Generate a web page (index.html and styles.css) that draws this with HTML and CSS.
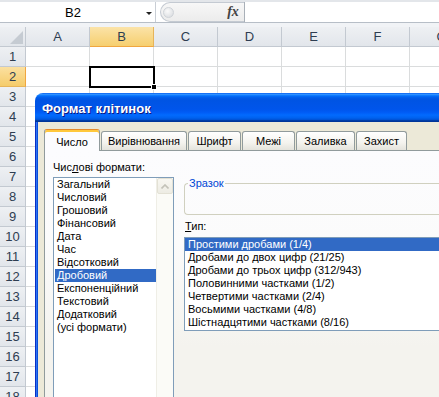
FILE: index.html
```html
<!DOCTYPE html>
<html>
<head>
  <meta charset="utf-8">
  <title>Формат клітинок</title>
  <link rel="stylesheet" href="styles.css">
</head>
<body>
  <div class="formula-bar">
    <div class="name-box">
      <span class="name-text">B2</span>
      <span class="drop"></span>
    </div>
    <div class="fx-box">
      <span class="grip"></span>
      <span class="fx">fx</span>
    </div>
    <div class="formula-input"></div>
  </div>
  <div class="bar-gap"></div>

  <div class="sheet">
    <div class="row head">
      <div class="corner"><span class="corner-mark"></span></div>
      <div class="col">A</div><div class="col sel">B</div><div class="col">C</div><div class="col">D</div><div class="col">E</div><div class="col">F</div><div class="col">G</div>
    </div>
    <div class="row"><div class="rh">1</div><div class="c"></div><div class="c"></div><div class="c"></div><div class="c"></div><div class="c"></div><div class="c"></div><div class="c"></div></div>
    <div class="row"><div class="rh sel">2</div><div class="c"></div><div class="c active"><span class="handle"></span></div><div class="c"></div><div class="c"></div><div class="c"></div><div class="c"></div><div class="c"></div></div>
    <div class="row"><div class="rh">3</div><div class="c"></div><div class="c"></div><div class="c"></div><div class="c"></div><div class="c"></div><div class="c"></div><div class="c"></div></div>
    <div class="row"><div class="rh">4</div><div class="c"></div><div class="c"></div><div class="c"></div><div class="c"></div><div class="c"></div><div class="c"></div><div class="c"></div></div>
    <div class="row"><div class="rh">5</div><div class="c"></div><div class="c"></div><div class="c"></div><div class="c"></div><div class="c"></div><div class="c"></div><div class="c"></div></div>
    <div class="row"><div class="rh">6</div><div class="c"></div><div class="c"></div><div class="c"></div><div class="c"></div><div class="c"></div><div class="c"></div><div class="c"></div></div>
    <div class="row"><div class="rh">7</div><div class="c"></div><div class="c"></div><div class="c"></div><div class="c"></div><div class="c"></div><div class="c"></div><div class="c"></div></div>
    <div class="row"><div class="rh">8</div><div class="c"></div><div class="c"></div><div class="c"></div><div class="c"></div><div class="c"></div><div class="c"></div><div class="c"></div></div>
    <div class="row"><div class="rh">9</div><div class="c"></div><div class="c"></div><div class="c"></div><div class="c"></div><div class="c"></div><div class="c"></div><div class="c"></div></div>
    <div class="row"><div class="rh">10</div><div class="c"></div><div class="c"></div><div class="c"></div><div class="c"></div><div class="c"></div><div class="c"></div><div class="c"></div></div>
    <div class="row"><div class="rh">11</div><div class="c"></div><div class="c"></div><div class="c"></div><div class="c"></div><div class="c"></div><div class="c"></div><div class="c"></div></div>
    <div class="row"><div class="rh">12</div><div class="c"></div><div class="c"></div><div class="c"></div><div class="c"></div><div class="c"></div><div class="c"></div><div class="c"></div></div>
    <div class="row"><div class="rh">13</div><div class="c"></div><div class="c"></div><div class="c"></div><div class="c"></div><div class="c"></div><div class="c"></div><div class="c"></div></div>
    <div class="row"><div class="rh">14</div><div class="c"></div><div class="c"></div><div class="c"></div><div class="c"></div><div class="c"></div><div class="c"></div><div class="c"></div></div>
    <div class="row"><div class="rh">15</div><div class="c"></div><div class="c"></div><div class="c"></div><div class="c"></div><div class="c"></div><div class="c"></div><div class="c"></div></div>
    <div class="row"><div class="rh">16</div><div class="c"></div><div class="c"></div><div class="c"></div><div class="c"></div><div class="c"></div><div class="c"></div><div class="c"></div></div>
    <div class="row"><div class="rh">17</div><div class="c"></div><div class="c"></div><div class="c"></div><div class="c"></div><div class="c"></div><div class="c"></div><div class="c"></div></div>
    <div class="row"><div class="rh">18</div><div class="c"></div><div class="c"></div><div class="c"></div><div class="c"></div><div class="c"></div><div class="c"></div><div class="c"></div></div>
  </div>

  <div class="dialog">
    <div class="dialog-title">Формат клітинок</div>
    <div class="dialog-body">
      <div class="tabs">
        <div class="tab on tab-number">Число</div>
        <div class="tab tab-align">Вирівнювання</div>
        <div class="tab tab-font">Шрифт</div>
        <div class="tab tab-border">Межі</div>
        <div class="tab tab-fill">Заливка</div>
        <div class="tab tab-protect">Захист</div>
      </div>
      <div class="panel">
        <div class="left-col">
          <div class="label">Чис<u>л</u>ові формати:</div>
          <div class="listbox cats">
            <div class="items">
              <div class="item">Загальний</div>
              <div class="item">Числовий</div>
              <div class="item">Грошовий</div>
              <div class="item">Фінансовий</div>
              <div class="item">Дата</div>
              <div class="item">Час</div>
              <div class="item">Відсотковий</div>
              <div class="item picked">Дробовий</div>
              <div class="item">Експоненційний</div>
              <div class="item">Текстовий</div>
              <div class="item">Додатковий</div>
              <div class="item">(усі формати)</div>
            </div>
            <div class="scrollbar">
              <div class="scroll-btn">
                <svg width="8" height="5" viewBox="0 0 8 5"><path d="M0.5 4.5 L4 1 L7.5 4.5" fill="none" stroke="#c3c2b8" stroke-width="1.6"/></svg>
              </div>
            </div>
          </div>
        </div>
        <div class="right-col">
          <fieldset class="sample">
            <legend>Зразок</legend>
          </fieldset>
          <div class="label type-label"><u>Т</u>ип:</div>
          <div class="listbox types">
            <div class="item picked">Простими дробами (1/4)</div>
            <div class="item">Дробами до двох цифр (21/25)</div>
            <div class="item">Дробами до трьох цифр (312/943)</div>
            <div class="item">Половинними частками (1/2)</div>
            <div class="item">Четвертими частками (2/4)</div>
            <div class="item">Восьмими частками (4/8)</div>
            <div class="item">Шістнадцятими частками (8/16)</div>
          </div>
        </div>
      </div>
    </div>
  </div>
</body>
</html>
```

FILE: styles.css
```css
* {
  box-sizing: border-box;
}
body {
  margin: 0;
  width: 439px;
  height: 397px;
  overflow: hidden;
  position: relative;
  background-color: #fff;
  font-family: "Liberation Sans", Arial, sans-serif;
}

/* formula bar */
.formula-bar {
  height: 23px;
  display: flex;
  background-color: #fff;
  border-top: 2px solid #e3e6ea;
  border-bottom: 1px solid #b7bec7;
}
.name-box {
  width: 156px;
  display: flex;
  align-items: center;
  border-right: 1px solid #c9ced5;
}
.name-text {
  flex: 1;
  text-align: center;
  font-size: 13px;
  color: #000;
}
.drop {
  width: 0;
  height: 0;
  margin: 2px 3px 0 0;
  border-left: 3px solid transparent;
  border-right: 3px solid transparent;
  border-top: 3px solid #222;
}
.fx-box {
  width: 84px;
  margin-left: 4px;
  display: flex;
  align-items: center;
  justify-content: space-between;
  border: 1px solid #c4cad2;
  border-right: none;
  border-radius: 10px 0 0 10px;
  background: linear-gradient(#f7f7f7, #ececec);
}
.grip {
  width: 11px;
  height: 11px;
  margin-left: 2px;
  border-radius: 50%;
  background: radial-gradient(circle at 40% 35%, #fafafa, #d6d9dd);
  border: 1px solid #cfd3d8;
}
.fx {
  width: 22px;
  text-align: center;
  font-family: "Liberation Serif", serif;
  font-style: italic;
  font-weight: bold;
  font-size: 14px;
  color: #444;
}
.formula-input {
  flex: 1;
  background-color: #fff;
  border-left: 1px solid #a9b0b8;
}
.bar-gap {
  height: 4px;
  background-color: #f1f3f6;
}

/* sheet */
.row {
  display: flex;
  height: 20px;
}
.corner,
.col,
.rh {
  background: linear-gradient(#eef0f3, #e2e6eb);
  color: #2e3d51;
  font-size: 13px;
  border-right: 1px solid #c3c9d1;
  border-bottom: 1px solid #c3c9d1;
}
.corner {
  width: 26px;
  flex: none;
  display: flex;
  align-items: flex-end;
  justify-content: flex-end;
  padding: 0 2px 2px 0;
}
.corner-mark {
  width: 0;
  height: 0;
  border-left: 13px solid transparent;
  border-bottom: 13px solid #c5cbd2;
}
.col {
  width: 64px;
  flex: none;
  text-align: center;
  line-height: 19px;
}
.rh {
  width: 26px;
  flex: none;
  text-align: center;
  line-height: 19px;
}
.col.sel {
  background: linear-gradient(#fbe3a8, #f6cf6f);
  border-bottom-color: #f0a640;
  border-right-color: #e6b45a;
}
.rh.sel {
  background: linear-gradient(#fbe0a0, #f5cc6b);
  border-right-color: #f0a640;
  border-bottom-color: #e6b45a;
}
.c {
  width: 64px;
  flex: none;
  border-right: 1px solid #dadcdd;
  border-bottom: 1px solid #dadcdd;
}
.c.active {
  position: relative;
}
.c.active::after {
  content: "";
  position: absolute;
  left: -1px;
  top: -1px;
  right: -2px;
  bottom: -2px;
  border: 2px solid #000;
}
.handle {
  position: absolute;
  right: -4px;
  bottom: -4px;
  width: 6px;
  height: 6px;
  background-color: #000;
  border: 1px solid #fff;
  z-index: 1;
}

/* dialog */
.dialog {
  position: absolute;
  left: 35px;
  top: 93px;
  width: 420px;
  height: 320px;
  display: flex;
  flex-direction: column;
  font-family: "Liberation Sans", Arial, sans-serif;
  font-size: 11px;
  color: #000;
}
.dialog-title {
  height: 29px;
  flex: none;
  padding: 2px 0 0 7px;
  line-height: 27px;
  border-radius: 8px 8px 0 0;
  background: linear-gradient(#0058ee 0%, #3593ff 4%, #288eff 6%, #127dff 8%, #036ffc 10%, #0262ee 14%, #0057e5 20%, #0054e3 24%, #0055eb 56%, #005bf5 66%, #026afe 76%, #0062ef 86%, #0052d6 92%, #0040ab 94%, #003092 100%);
  color: #fff;
  font-weight: bold;
  font-size: 13px;
  text-shadow: 1px 1px #0a1883;
}
.dialog-body {
  flex: 1;
  padding: 7px 0 0 9px;
  background: linear-gradient(to right, #0a2fc4 0 1px, #2b74f2 1px 2px, #0a4ddc 2px 3px, #ece9d8 3px);
  display: flex;
  flex-direction: column;
}
.tabs {
  display: flex;
  align-items: flex-end;
  height: 22px;
  flex: none;
  position: relative;
  z-index: 1;
}
.tab {
  height: 19px;
  margin: 0 1px 1px 0;
  text-align: center;
  line-height: 18px;
  border: 1px solid #919b9c;
  border-bottom: none;
  border-radius: 3px 3px 0 0;
  background: linear-gradient(#ffffff, #f4f3ee 60%, #e4e3dc);
}
.tab.on {
  height: 22px;
  margin-bottom: 0;
  padding-top: 3px;
  background: #fcfcfe;
  border-top-color: #e68b2c;
  box-shadow: inset 0 2px #ffc83c;
}
.tab-number { width: 56px; }
.tab-align { width: 86px; }
.tab-font { width: 53px; }
.tab-border { width: 53px; }
.tab-fill { width: 59px; }
.tab-protect { width: 51px; }

.panel {
  flex: 1;
  margin-top: -1px;
  display: flex;
  padding: 10px 0 0 8px;
  border: 1px solid #919b9c;
  border-right: none;
  background: linear-gradient(#fcfcfe 0%, #fbfbfb 35%, #f4f3ee 75%);
}
.label {
  line-height: 13px;
  height: 13px;
}
.left-col {
  width: 121px;
  flex: none;
  display: flex;
  flex-direction: column;
}
.listbox {
  border: 1px solid #7f9db9;
  background-color: #fff;
}
.cats {
  margin-top: 3px;
  flex: 1;
  display: flex;
}
.items {
  flex: 1;
  padding-left: 1px;
}
.item {
  line-height: 13px;
  height: 13px;
  padding-left: 2px;
  white-space: nowrap;
}
.item.picked {
  background-color: #316ac5;
  color: #fff;
}
.scrollbar {
  width: 17px;
  flex: none;
  background-color: #fbfbf7;
  border-left: 1px solid #efeee6;
}
.scroll-btn {
  width: 16px;
  height: 16px;
  display: flex;
  align-items: center;
  justify-content: center;
  border: 1px solid #e3e1d5;
  border-radius: 2px;
  background: linear-gradient(#f8f7f1, #edece4);
}
.right-col {
  flex: 1;
  margin-left: 10px;
  display: flex;
  flex-direction: column;
}
.sample {
  margin: 16px 0 0;
  padding: 0;
  height: 38px;
  border: 1px solid #d0d0bf;
  border-right: none;
  border-radius: 4px 0 0 4px;
}
.sample legend {
  margin-left: 3px;
  padding: 0 1px;
  line-height: 13px;
  color: #0046d5;
}
.type-label {
  margin-top: 5px;
  padding-left: 1px;
}
.types {
  margin-top: 4px;
  height: 94px;
  border-right: none;
}
.types .item {
  padding-left: 3px;
}
```
